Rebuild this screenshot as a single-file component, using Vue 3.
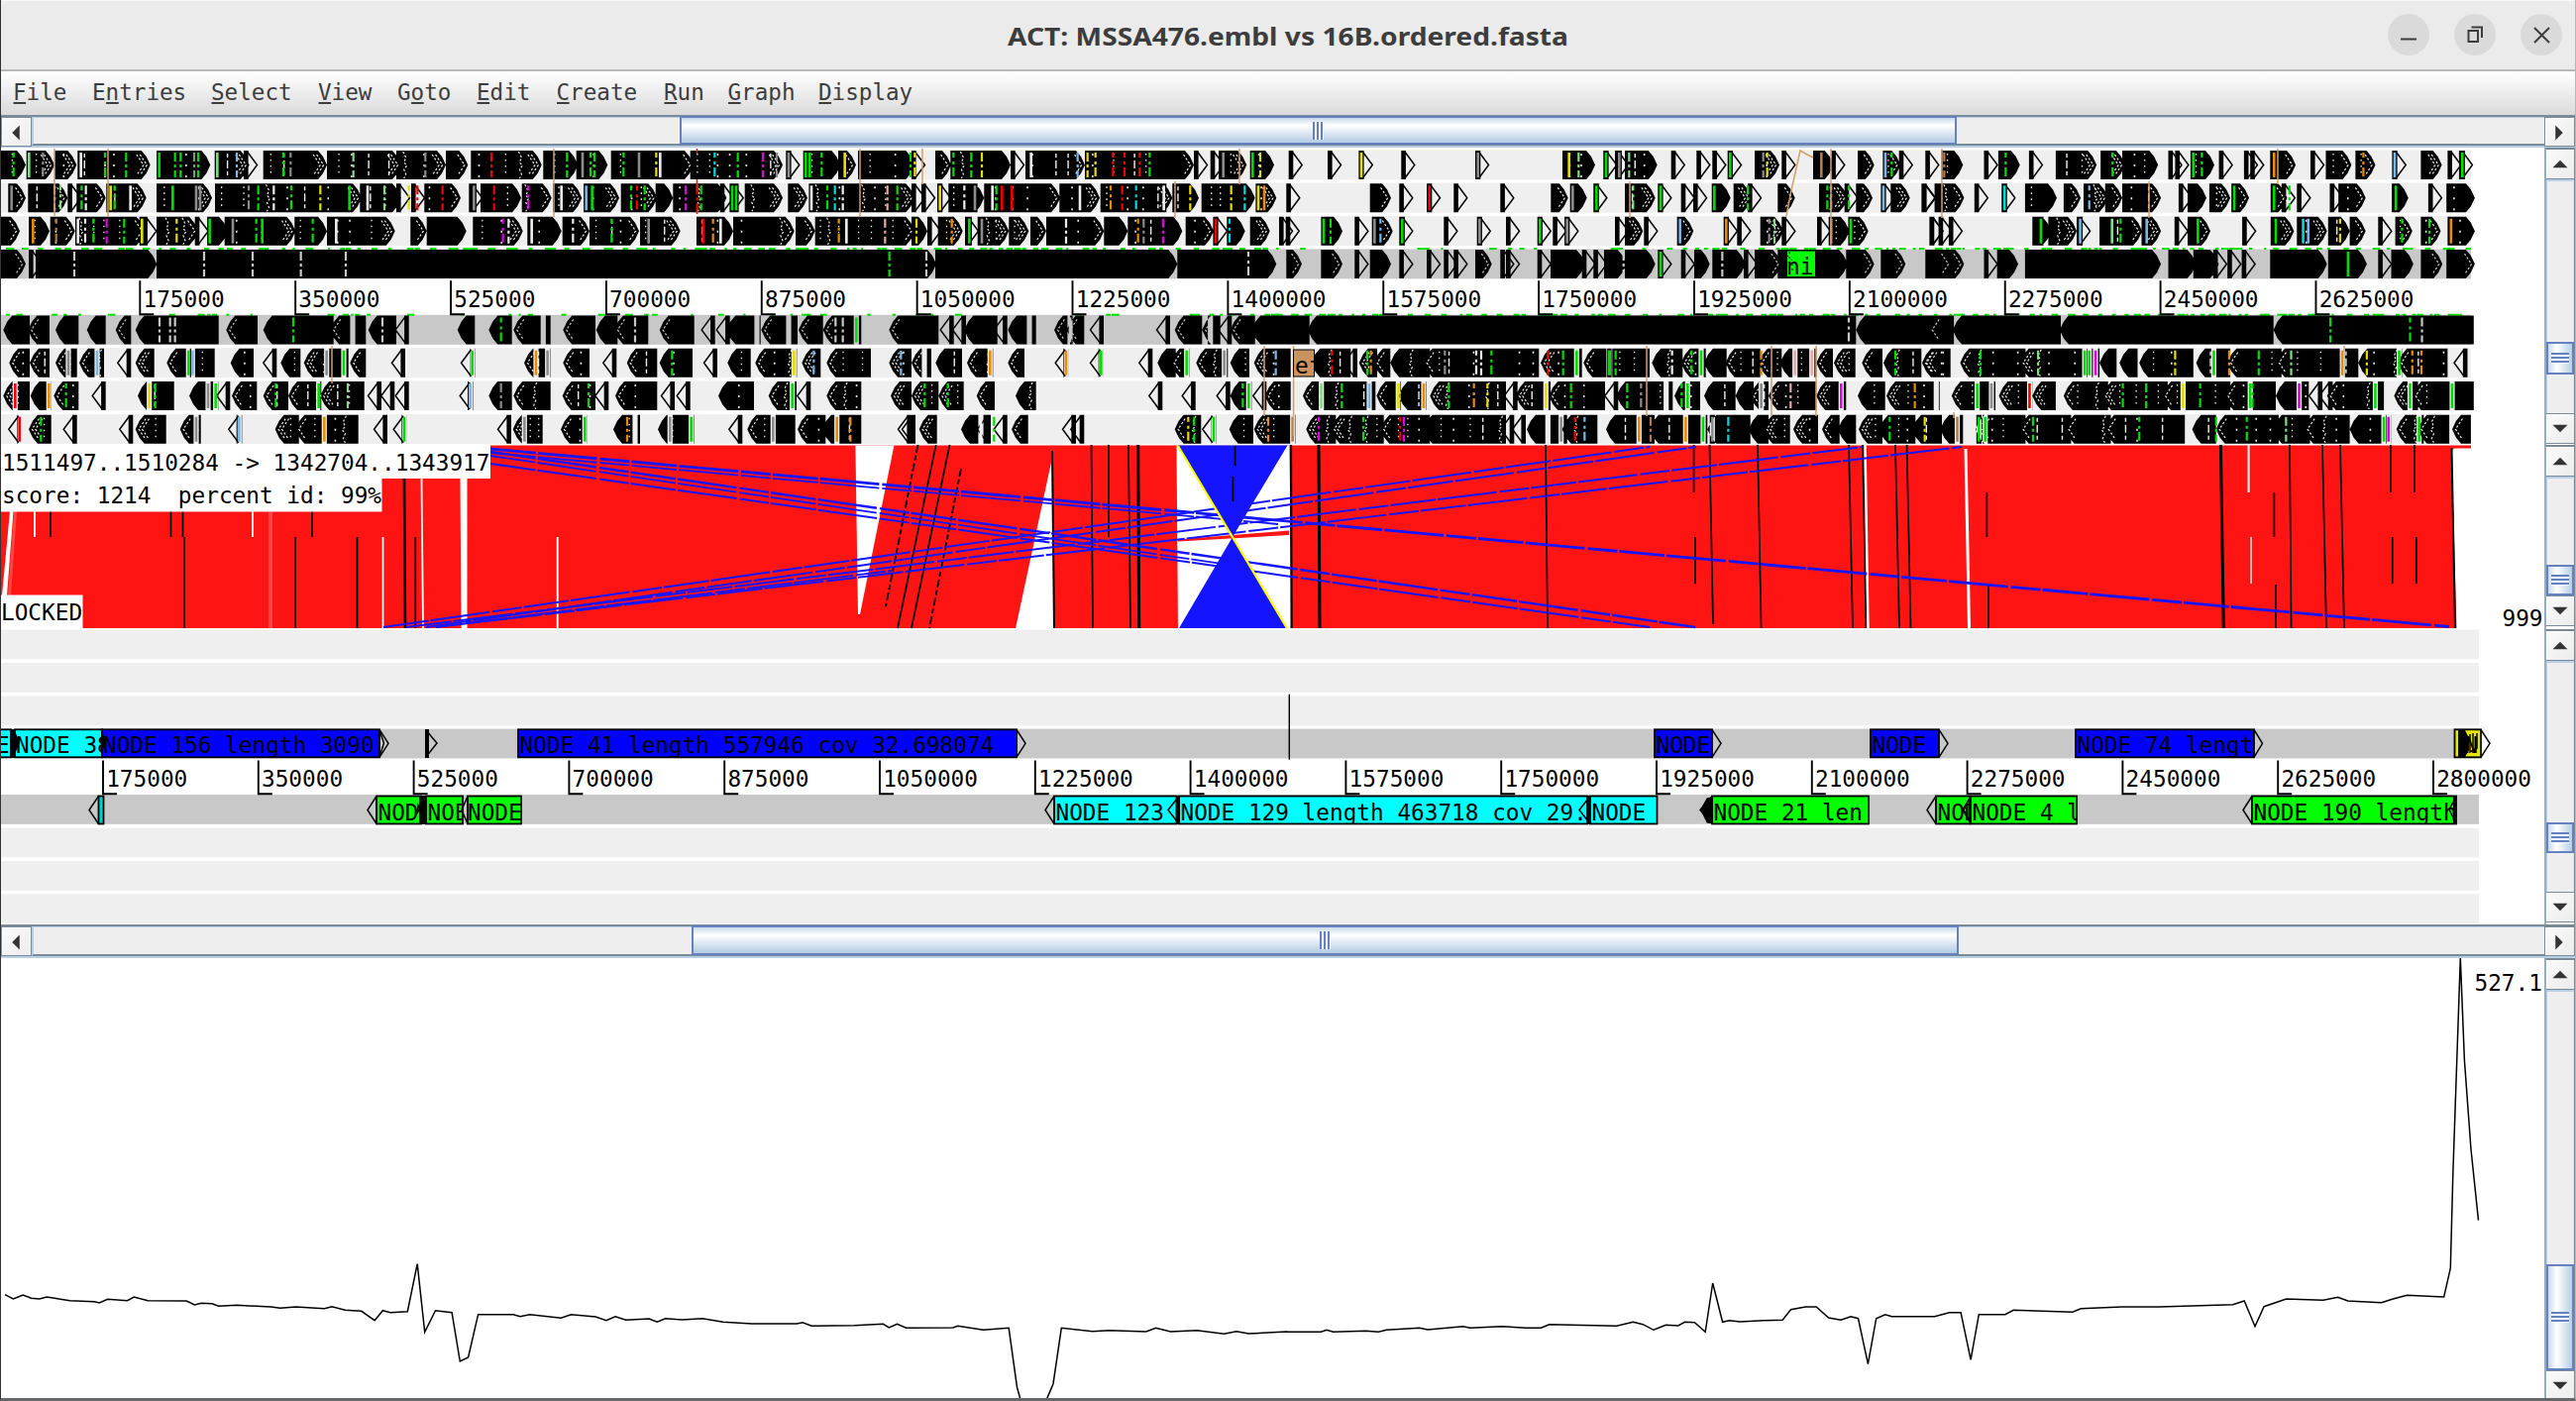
<script setup>
const menus = [
  ['', 'F', 'ile', 13], ['E', 'n', 'tries', 93], ['', 'S', 'elect', 213], ['', 'V', 'iew', 321],
  ['G', 'o', 'to', 401], ['', 'E', 'dit', 481], ['', 'C', 'reate', 561.5], ['', 'R', 'un', 670],
  ['', 'G', 'raph', 734.5], ['', 'D', 'isplay', 826],
]

const palette = {
  g: '#00dc00', G: '#84dc84', r: '#f00000', y: '#e6de00', o: '#e88c00', b: '#78b8e8', m: '#e000e0',
  c: '#00d8d8', s: '#8c8c8c', n: '#b07c50', p: '#e8a8a8', w: null,
}

// Each strand row: [top, direction, background, texture?, chunks of [origin, units per px, features]]
// "a-b" is a merged run of features, "a" a lone one, "g12" a coloured stripe, "g12!" an unbroken stripe.
const strandRows = [
  [152, 1, '#efefef', true, [
    [0, 3, '0-78 82-165 165-232 235-455 475-637 652-755 738-778 797-990 990-1215 g41 G88! s130 g318 g382 w245! g482! g530 g547 s588 g600 G658! b717 g858 s880 G1070'],
    [400, 3, '0-150 150-217 226-440 445-550 545-640 650-900 890-1170 1180-1222 1232-1345 1338-1392 1398-1570 s88 r288 g517 s564! g588 g600 g688 s735! y787 w799! c964 g1034 m1110 s1152 s1188! g1240! g1252! g1288 y1358! g1557'],
    [920, 3, '0-45 72-120 118-300 300-345 345-525 525-855 855-900 905-930 930-1015 1025-1098 1142 1260 1355 1483 g127 g181 y213 w362! b503 y533 y557 r610 r645 r691 g721 g1033! y1056 s944! y10 y1362!'],
    [1440, 3, '147 411-510 535-575 570-615 600-698 740 817 865 912 993-1068 1075 1170-1232 1225 1305-1355 1382-1435 1430 1510 s155! y431! G460 g543! s583! G613 g919! s1019 y1031 n1195! b1389! g1408'],
    [1700, 1.742, '452-490 527 552-590 606-632 653-725 732-775 770-833 851 863-888 890-932 940 984 995 1030-1075 1101 1128-1173 1180-1215 1245 1295-1332 1342 1362 n457 g565 g753 g895! g910 o1037! o1194 b1249! g1368!'],
  ]],
  [185.3, 1, '#efefef', true, [
    [0, 3, '25-78 85-205 205-245 232-320 322-443 474-642 651-1095 1090-1215 s35! n165 G183 g247 w260 y335! g347 w395! g523! s594! s606! s753 g782 w829 g882 y970 g1058! w1113! G1164'],
    [400, 3, '0-45 45-90 85-195 220-258 255-378 380-470 474-562 568-675 680-790 785-838 838-1000 980-1020 1010-1055 1055-1170 1186-1245 1250-1570 y38 r64 r140 s235! r296 m400 w500! b575! g593! g711 r729 g752 m876 r911 g923 g1017! g1029! w1257! g1305 c1328 w1352 p1487 g1517'],
    [920, 3, '0-40 30-70 78-117 112-220 220-450 448-570 572-790 790-870 878-1040 1043-1105 1135 1388-1452 1477 y86! w160 s192! w245! g257 r274! r304! w510! o603 r638 c680 w764! y844 y968 c1009 y1050! o1068!'],
    [1440, 3, '0 82 223 376-428 435-485 505 600-692 700 770-815 807 865-920 929-985 972 1063-1115 1188-1275 1265-1305 1300-1350 1377 1405-1463 1500 r8! s442! g514! G625 g708! g871! g972 g1213 n1225 g1278 b1383!'],
    [1700, 1.742, '417 440-492 510 558 599-655 667-697 702-745 740-770 770-838 869 885-918 923-960 962-993 1031-1060 1050-1075 1077-1103 1135 1150-1198 1244-1273 1308-1335 1340-1390 c563! b712 g967! g1037! g1064 g1251!'],
  ]],
  [218.7, 1, '#efefef', true, [
    [0, 3, '0-60 87-150 152-227 228-440 433-475 474-600 590-630 628-690 680-895 892-990 990-1196 o100! n170 w236! w258 g283 m323 g376 y430! y535 g635! s705! g776 g794! g947 w1018!'],
    [400, 3, '43-92 92-212 232-383 397-500 503-585 585-735 738-860 909-1020 1020-1205 1209-1268 1268-1570 m323 w340 w410! w535 g652 s764! r929! o959 w982! o1340 w1363! p1480'],
    [920, 3, '0-48 48 80-155 162-205 200-295 295-355 360-408 408-583 583-655 655-820 830-915 915-960 955-1010 1025-1085 1113 1133 1242-1305 1342 1395-1457 1477 y15 o122 g175! s213! w468 o686 s703 m762 r921! c963 g1248! g1269 s1402! b1420 g1486!'],
    [1440, 3, '52 152 240 335 382 418 570 600-655 658 758-808 900-945 940 1010-1080 1075 1182 1222-1280 1278-1337 1523 s160! g343! s425! b767! o907! s1037 G1053 n1225! g1284!'],
    [1700, 1.742, '431 447 465 612-645 640-690 690-715 730-760 745-805 804-838 862 885-925 981 1031-1072 1077-1130 1132-1170 1170-1198 1220 1250-1280 1295-1330 1342-1390 g627! b696! G752! g767 b813! g903! g1040! c1088! b1097! y1153 g1262 g1310 o1348!'],
  ]],
  [252, 1, '#c8c8c8', false, [
    [0, 3, '0-78 87-125 108-475 474-1230 w225 w765 w911 w1047 w618'],
    [400, 3, '0-1590 g1493'],
    [920, 3, '-10-75 72-805 805-1105 1135-1182 1240-1305 1342 1388-1452 1477-1523 w45 w1020'],
    [1440, 3, '0-45 52 82 147-197 223 240 335-375 375-480 470 505 537-605 600-692 700 770-815 810-857 865-965 960 993-1075 1063-1275 1270-1355 1375-1450 1510-1590 w596 g708! w895'],
    [1700, 1.742, '424-492 527 550-587 599-838 851-900 895-940 930 955 980 1030-1130 1132-1200 1220-1245 1243-1282 1295-1333 1340-1390 g1167!'],
  ]],
  [318.4, -1, '#c8c8c8', false, [
    [0, 3, '10-90 85-150 168-238 263-320 350-397 410-662 685-780 797-1010 1000-1108 1115-1200 w483 w515 w530 g888 w1068! w1158'],
    [400, 3, '38 185-238 280-350 355-467 505-603 605-670 660-763 797-902 928-965 965-1010 1000-1103 1105-1215 1218-1292 1292-1408 1492-1590 g317 w445! w1092! w723 g1393! w1188! w1330 w1352'],
    [920, 3, '-10-82 82-128 120-165 160-260 250-290 292-377 432-480 470-523 538-582 742-783 797-880 880-935 925-970 965-1040 1030-1205 1200-1590 w357! w480! w905!'],
    [1440, 3, '-30-1300 1300-1590 w1278'],
    [1700, 1.742, '430-474 472-662 660-1036 1036-1388 g1136 g1276 w1297'],
  ]],
  [351.7, -1, '#efefef', true, [
    [0, 3, '28-90 90-150 168-233 240-315 397 410-467 505-650 698-768 838 850-910 920-1055 1060-1108 s207! b294! g571! b583! s989! g1041!'],
    [400, 3, '27 237 387-467 505-585 667 698-790 797-897 972 1003-1073 1087-1213 1228-1285 1303-1437 1492-1560 g230! o423! s458! g835 y1204! b1264 b1528'],
    [920, 3, '0-60 73-153 168-247 292-342 476 582 730 745-800 785-840 862-958 965-1023 1037-1148 1210-1330 1350 1355-1410 1400-1450 1450-1570 w39! o238! o468! g574! g833! b1103 r1273 s947! g1380 o1391'],
    [1440, 3, '-10-340 345-470 475-675 682-775 770-845 840-908 905-1010 1005-1075 1070-1180 1180-1230 1233-1298 1318-1380 1383-1498 1500-1580 s55 w150 w165 g196 r367 g413 g454! g552! g554! g572 g802 g831! o1013 p1115! p1166! g1419 w743'],
    [1700, 1.742, '420-468 485-600 590-730 730-760 765-797 800-895 900-960 955-1050 1040-1185 1185-1262 1255-1342 1377 g521 G622 g704! g712! m723! y863 g931! o958 g1010 G1067 o1157! y1200 g1257! o1280 o1296'],
  ]],
  [385, -1, '#efefef', true, [
    [0, 3, '10-90 92-155 163-238 275-320 417-527 573-660 697 702-778 797-873 873-970 970-1103 1155 1195 r46! o148! g200 y452! g470 g653! g835 g965! G1053 s630!'],
    [400, 3, '38 233 280-350 355-467 503-603 643 663-790 843 890 975-1083 1127-1212 1210-1255 1303-1408 1497-1560 b224! g582 g1199! s317'],
    [920, 3, '0-82 82-158 197-252 315-377 760 860 920-965 965-1030 1030-1075 1070-1148 1185-1405 1408-1480 1475-1560 g40 g110 g1003 g1021! G1241! g1303 b1386! y1474! o1551!'],
    [1440, 3, '10-240 275 270-375 370-540 580 575-745 750-828 840-935 935-990 980-1035 1035-1180 1180-1270 1305-1388 1392-1553 g67 o143 y184 y361! g437 g607 w725! g772 g790! p1102 m1255! o1478 w1543! s649 s1013!'],
    [1700, 1.742, '470-547 553-612 612-653 667-745 735-850 840-960 950-1040 1040-1098 1122 1125-1140 1130-1230 1248-1290 1280-1388 g515! s540! r607! g771 g812 y877! g907 g995! g999 m1081! g1215! g1276! g1350!'],
  ]],
  [418.7, -1, '#efefef', true, [
    [0, 3, '67 87-155 233 403 410-503 545-608 733 833-905 895-1085 1173 r59! g124 b724! o982! s594!'],
    [400, 3, '32 348 353-443 498-578 657-738 792-902 1048 1063-1208 1215-1300 1290-1408 1517-1560 g24! s388! g571! o699 g893! s829! s1141! o1334! o1375 w723!'],
    [920, 3, '0-12 23-77 150-230 240 250-290 303-353 498 523 797-877 882-922 962-1035 1037-1163 1195-1285 1270-1430 1420-1570 g250 w210! y838 g856 g915! o1080 n1154! m1233 g1368 r1480 m1491'],
    [1440, 3, '-10-240 265 300 303-425 410-517 543-690 675-850 850-980 975-1035 1020-1100 1110-1185 1197-1250 1245-1300 1308-1380 1370-1480 1470-1560 w367! s407! r449 b478 o643! n678 o784! g837! c913 g1402 y1508 s865!'],
    [1700, 1.742, '450-490 512-600 590-680 670-750 740-880 893-935 935-1045 1035-1100 1090-1170 1170-1243 1252-1300 1290-1345 1350-1383 n480! g518! g529! g613 g800 g935 g989 G1058 g1230! m1238! g1292!'],
  ]],
]

let seed = 7
const rnd = () => {
  seed = (seed * 16807) % 2147483647
  return seed / 2147483647
}
const H = 29
const f = (n) => n.toFixed(1)

const rows = strandRows.map(([y, dir, bg, textured, chunks]) => {
  let solid = ''
  let outline = ''
  let chevrons = ''
  const stripes = []
  const holes = []
  const m = y + H / 2
  const b = y + H
  const lone = (x) => {
    const t = x + dir * 13.5
    const k = x + dir * 3.5
    const e = x + dir * 4.6
    solid += `M${f(x)} ${y}H${f(e)}V${b}H${f(x)}Z`
    outline += `M${f(k)} ${y + 1}L${f(t)} ${m}L${f(k)} ${b - 1}`
  }
  for (const [origin, unit, text] of chunks) {
    for (const tok of text.split(' ')) {
      if (/^[a-zA-Z]/.test(tok)) {
        const full = tok.endsWith('!')
        const x = origin + parseFloat(tok.slice(1)) / unit
        if (full) solid += `M${f(x - 2.6)} ${y}h5.2v${H}h-5.2Z`
        stripes.push({ x, color: palette[tok[0]] || bg, dash: full ? 'none' : rnd() > 0.5 ? '5 4 3 3 9 3' : '9 3 3 3', w: full ? 2.6 : 2.2 })
        continue
      }
      const range = tok.match(/^(-?\d+)-(\d+)$/)
      if (!range) {
        lone(origin + parseFloat(tok) / unit)
        continue
      }
      const p = origin + range[1] / unit
      const q = origin + range[2] / unit
      const w = q - p
      if (w < 15.5) {
        lone(dir > 0 ? p : q)
        continue
      }
      const tail = dir > 0 ? p : q
      const tip = dir > 0 ? q : p
      const neck = tip - dir * 9
      solid += `M${f(tail)} ${y}H${f(neck)}L${f(tip - dir * 4)} ${y + 6}L${f(tip)} ${m}L${f(tip - dir * 4)} ${b - 6}L${f(neck)} ${b}H${f(tail)}Z`
      const dice = rnd()
      const layers = textured ? (dice > 0.65 ? 2 : dice > 0.3 ? 1 : 0) : w < 45 && dice > 0.5 ? 1 : 0
      for (let i = 1; i <= layers; i++) {
        const c = tip - dir * i * 3.4
        if (Math.abs(c - tail) > 11) chevrons += `M${f(c - dir * 7)} ${y + 4}L${f(c)} ${m}L${f(c - dir * 7)} ${b - 4}`
      }
      if (textured) {
        let x = Math.min(tail, neck) + 5 + rnd() * 8
        const end = Math.max(tail, neck) - 3
        while (x < end) {
          const kind = rnd()
          if (kind < 0.34) holes.push({ x, dash: '1.6 4.4', w: 1.3 })
          else if (kind < 0.5) holes.push({ x, dash: '4 3 8 3', w: 1.4 })
          else if (kind < 0.78) holes.push({ x, dash: '2 9', w: 1.6 })
          else if (kind < 0.88) chevrons += `M${f(x - dir * 2)} ${y + 1}l${dir * 3} 6l${-dir * 2} 5l${dir * 3} 3l${-dir * 3} 4l${dir * 2} 5l${-dir * 2} 4`
          x += 8 + rnd() * 18
        }
      }
    }
  }
  return { y, bg, solid, outline, chevrons, stripes, holes }
})

const ticks = [250, 316.7].flatMap((y) => {
  const out = []
  for (let x = 6; x < 2490; x += 4 + rnd() * 15) {
    if (y < 300 && x > 1290 && x < 1680 && rnd() > 0.25) continue
    if (y > 300 && x < 1200 && rnd() > 0.45) continue
    out.push({ x, y, w: 2 + rnd() * 6 })
  }
  return out
})

const bridges = [
  [55, 150, 219], [109, 150, 219], [559, 150, 219], [868, 150, 219], [931, 150, 186], [1251, 150, 186],
  [1186, 183, 220], [1645, 183, 220], [1848, 150, 248], [1960, 150, 220], [2299, 150, 186], [2169, 183, 220],
  [335, 349, 387], [1276, 349, 420], [1305.6, 349, 440], [1662, 349, 420], [1788, 349, 420], [1833, 349, 420],
  [1972, 416, 422], [2366, 349, 354],
]

const ruler1 = Array.from({ length: 15 }, (_, i) => ({ x: 141.3 + i * 156.87, label: String((i + 1) * 175000) }))
const ruler2 = Array.from({ length: 16 }, (_, i) => ({ x: 104 + i * 156.8, label: String((i + 1) * 175000) }))
const CH = 13.68
const scoreLine = 'score: 1214\u00a0\u00a0percent id: 99%'

// Seams between matches: [x top, y top, x bottom, y bottom, width]
const seamsBlack = [
  [51, 516, 51, 542], [172.5, 516, 172.5, 542], [184.5, 516, 184.5, 542], [315, 516, 315, 542], [186, 542, 186, 634],
  [298, 542, 298, 634], [360.5, 542, 360.5, 634], [408, 483, 409, 634, 2.6], [419.3, 542, 419.3, 634],
  [944.7, 449, 906, 634], [958.5, 449, 920, 634],
  [1062, 455, 1064, 634, 2], [1101.5, 449, 1103, 634], [1119, 449, 1119, 542], [1139, 449, 1141, 634],
  [1148.7, 449, 1149.7, 634, 3], [1303, 449, 1303.6, 634, 2.2], [1331, 449, 1332, 634, 3], [1560, 449, 1562, 634],
  [1709.6, 449, 1709.6, 497], [1711, 542, 1711, 589], [1725.5, 449, 1729, 630], [1774, 449, 1777.6, 634],
  [1866, 449, 1870, 634], [1880, 449, 1883.5, 634], [1913, 449, 1917, 634], [1924.6, 449, 1928.5, 634],
  [2005.4, 497, 2005.4, 542], [2007, 589, 2007, 634], [2241.4, 449, 2244.3, 634, 3], [2295.4, 497, 2295.4, 542],
  [2297, 590, 2297, 634], [2311, 449, 2312.6, 634], [2344, 449, 2348, 634], [2362, 449, 2366, 634],
  [2413, 449, 2413, 497], [2414.7, 542, 2414.7, 589], [2437, 449, 2437, 497], [2438.8, 542, 2438.8, 589],
  [2474.5, 452, 2478, 634, 2],
]
const seamsWhite = [
  [35, 516, 35, 542], [255, 516, 255, 542], [386.5, 542, 386.5, 634], [425.5, 483, 427, 634],
  [562.7, 542, 562.7, 634], [1882.5, 449, 1885.5, 634, 2.4], [1984, 453, 1987.5, 634, 3],
  [2269.6, 449, 2269.6, 497, 2], [2272, 542, 2272, 589, 1.4],
]
const hits = [
  [495, 453, 2472, 632.5, 2.8], [495, 457, 1290, 529, 1.8], [495, 456, 1711, 633, 2.4], [495, 460, 1260, 573, 1.8],
  [495, 468, 1665, 633, 2], [387, 633, 1665, 451, 2], [430, 633, 1712, 451, 2],
  [410, 633, 1880, 451, 2], [440, 633, 1980, 451, 2], [470, 629, 900, 576, 1.8],
]

const contigsTop = [
  [0, 11, '#00ffff', 'E', null, -4], [15, 88, '#00ffff', 'NODE 38', null, 1], [103, 280, '#0000ff', 'NODE 156 length 3090', 392, 1],
  [523, 503, '#0000ff', 'NODE 41 length 557946 cov 32.698074', 1035], [1670, 58, '#0000ff', 'NODE', 1737],
  [1888, 69, '#0000ff', 'NODE', 1966], [2095, 180, '#0000ff', 'NODE 74 lengt', 2283.5], [2477.5, 26.5, '#e6e600', 'N', 2513, 10],
]
const contigsBottom = [
  [99.5, 5, '#00d0d0', '', 90], [380, 45, '#00ff00', 'NOD', 371], [430, 37, '#00ff00', 'NOE', null],
  [472, 54, '#00ff00', 'NODE', 466, 0], [1064, 123.5, '#00ffff', 'NODE 123', 1055],
  [1190, 412, '#00ffff', 'NODE 129 length 463718 cov 29.', 1179], [1605, 67.5, '#00ffff', 'NODE', 1594],
  [1728, 158, '#00ff00', 'NODE 21 len', 1716], [1954, 34, '#00ff00', 'NOD', 1945], [1989, 107, '#00ff00', 'NODE 4 l', 1982],
  [2273, 206, '#00ff00', 'NODE 190 length', 2264],
]
const contigs = [
  ...contigsTop.map((c) => ({ c, y: 736.3, dir: 1 })),
  ...contigsBottom.map((c) => ({ c, y: 803.5, dir: -1 })),
].map(({ c: [x, w, color, label, tip, pad = 1.5], y, dir }) => ({
  x, w, color, label, y, pad,
  head: tip === null ? '' : `M${dir > 0 ? x + w : x} ${y}L${tip} ${y + 14}L${dir > 0 ? x + w : x} ${y + 28}`,
}))

const trace = (ox, sx, oy, s) => s.split(' ').map((p) => {
  const [a, b] = p.split(',')
  return `${f(ox + a / sx)},${f(oy + b / 3)}`
}).join(' ')
const coverage = [
  trace(0, 1.206, 1200, '6,320 16,333 28,321 38,331 48,333 57,327 85,338 115,341 121,345 131,334 155,338 163,327 180,338 227,339 237,351 245,346 258,347 266,355 288,352 330,357 341,361 360,357 395,362 404,356 420,367 440,370 456,398 466,368 475,374 496,371 508,227 517,433 530,368 550,374 560,522 570,510 582,380 625,380 633,386 645,380 683,391 695,380 725,387 738,398 749,386 762,397 790,393 800,403 810,392 830,396 855,392 880,403 915,408 970,408 977,404 988,415 1040,413 1075,409 1082,420 1092,409 1103,421 1160,420 1166,415 1197,427 1228,421 1238,600 1242,637 1274,637 1282,590 1292,421 1330,431 1350,428 1395,432 1407,421 1425,432 1457,428 1490,439 1505,431 1520,438 1566,432'),
  trace(1300, 1.206, 960, '0,1153 40,1153 47,1147 55,1153 95,1150 110,1153 120,1147 160,1141 170,1146 213,1136 222,1141 260,1136 290,1141 308,1141 318,1130 400,1135 420,1123 432,1130 445,1147 460,1132 475,1134 483,1123 495,1124 508,1153 517,1005 529,1123 537,1118 550,1122 580,1118 602,1117 612,1085 630,1077 643,1077 658,1110 673,1117 685,1106 694,1112 706,1250 716,1112 727,1100 735,1106 787,1106 805,1094 819,1094 831,1237 841,1100 873,1100 883,1087 955,1093 965,1082 1015,1077 1060,1077 1150,1070 1164,1059 1177,1136 1188,1076 1215,1053 1260,1057 1278,1048 1290,1059 1331,1064 1345,1053 1362,1042 1407,1047 1415,960 1418,675 1427,20 1432,330 1440,600 1449,815'),
].join(' ')

const stripesBelow = [635.6, 669, 702.5, 735.6, 802, 835.7, 869, 902.4]
// Vertical scrollbars: space above the thumb, thumb height, slack under the lower button
const vbars = { top: [162, 33, 1], match: [87, 31, 3], below: [161, 31, 2], graph: [275, 107, 3] }
</script>

<template>
  <div class="window">
    <header class="titlebar">
      <svg class="title" width="568" height="40" viewBox="0 0 568 40">
        <text x="1" y="30.5" textLength="566" lengthAdjust="spacingAndGlyphs">ACT: MSSA476.embl vs 16B.ordered.fasta</text>
      </svg>
      <div class="controls">
        <span class="ctl"><svg viewBox="0 0 42 42"><path d="M13 25.5H29" /></svg></span>
        <span class="ctl"><svg viewBox="0 0 42 42"><path d="M14.5 17H24V28H14.5ZM17.5 13.5H28V24" /></svg></span>
        <span class="ctl"><svg viewBox="0 0 42 42"><path d="M14 14L29 29M29 14L14 29" /></svg></span>
      </div>
    </header>

    <nav class="menubar">
      <svg width="2598" height="44" viewBox="1 72 2598 44">
        <text v-for="(m, i) in menus" :key="i" :x="m[3]" y="100.5" :textLength="(m[0] + m[1] + m[2]).length * 13.6" lengthAdjust="spacingAndGlyphs">{{ m[0] }}<tspan>{{ m[1] }}</tspan>{{ m[2] }}</text>
        <rect v-for="(m, i) in menus" :key="'u' + i" :x="m[3] + m[0].length * 13.6 + 0.5" y="103" width="12.6" height="2" />
      </svg>
    </nav>

    <div class="hbar">
      <span class="btn"><svg viewBox="0 0 30 30"><path d="M11 15L19 7V23Z" /></svg></span>
      <span class="rail rail-a"><span class="thumb thumb-a"><i class="grip" /></span></span>
      <span class="btn end"><svg viewBox="0 0 30 30"><path d="M19 15L11 7V23Z" /></svg></span>
    </div>

    <section class="pane genome">
      <svg class="canvas" viewBox="1 149 2567 300">
        <rect v-for="r in rows" :key="r.y" x="0" :y="r.y - 0.6" width="2494" height="30" :fill="r.bg" />
        <rect v-for="(t, i) in ticks" :key="i" :x="t.x" :y="t.y" :width="t.w" height="2" fill="#00e000" />
        <g v-for="r in rows" :key="'g' + r.y">
          <path :d="r.outline" class="outline" />
          <path :d="r.solid" />
          <path :d="r.chevrons" fill="none" :stroke="r.bg" stroke-width="1.2" stroke-dasharray="2.2 2" />
          <line v-for="(h, i) in r.holes" :key="i" :x1="h.x" :x2="h.x" :y1="r.y + 3" :y2="r.y + 27" :stroke="r.bg" :stroke-width="h.w" :stroke-dasharray="h.dash" />
          <line v-for="(s, i) in r.stripes" :key="'s' + i" :x1="s.x" :x2="s.x" :y1="r.y + 2" :y2="r.y + 27" :stroke="s.color" :stroke-width="s.w" :stroke-dasharray="s.dash" />
        </g>
        <line v-for="(b, i) in bridges" :key="'l' + i" :x1="b[0]" :x2="b[0]" :y1="b[1]" :y2="b[2]" class="bridge" />
        <path d="M1803 218L1808 192L1817 152L1824 156L1830 159" class="bridge" />
        <line x1="703.5" x2="703.5" y1="150" y2="218" stroke="#e02020" stroke-width="1.6" stroke-dasharray="5 26 12 18" />
        <rect x="1804" y="253.5" width="28" height="25.5" fill="#00ff00" />
        <svg x="1804" y="253" width="28" height="27"><text x="-1" y="24" class="mono">ni</text></svg>
        <path d="M1804 258l5 5v12M1806 254v24" stroke="#000" stroke-dasharray="2 3" fill="none" />
        <rect x="1305.5" y="353" width="21" height="27" fill="#c8935f" stroke="#000" />
        <svg x="1306" y="353" width="20" height="27"><text x="1" y="24" class="mono">ef</text></svg>
        <g v-for="t in ruler1" :key="t.label">
          <path :d="`M${t.x} 283.3V317.3h14`" class="tick" />
          <text :x="t.x + 3.2" y="310" class="mono" :textLength="t.label.length * CH" lengthAdjust="spacingAndGlyphs">{{ t.label }}</text>
        </g>
      </svg>
      <div class="vbar" :style="{ paddingBottom: vbars.top[2] + 'px' }">
        <span class="btn"><svg viewBox="0 0 30 30"><path d="M15 11L23 19H7Z" /></svg></span>
        <span class="rail" :style="{ paddingTop: vbars.top[0] + 'px' }"><span class="thumb" :style="{ height: vbars.top[1] + 'px' }"><i class="grip" /></span></span>
        <span class="btn"><svg viewBox="0 0 30 30"><path d="M15 19L23 11H7Z" /></svg></span>
      </div>
    </section>

    <section class="pane match">
      <svg class="canvas" viewBox="1 449 2567 186">
        <path d="M0 449.5H2494V452.5H2477L2474.5 455L2479.5 634H0Z" fill="#ff1414" />
        <path d="M863.4 449.5H902.4L868 620H866ZM1062 462L1025 634.5H1064ZM1187.5 449.5H1301.5L1303.5 634.5H1189ZM10 516H13.5L7 601H2ZM464.5 483H471.5V634.5H465.5Z" fill="#fff" />
        <path d="M14 516h3L11 601h-3ZM271 516h4V634h-4Z" fill="#ff4444" />
        <path d="M1189 544.5L1301 535.5V540L1189 546.5Z" fill="#ff1414" />
        <path d="M1189 449.5H1299.5L1244 542L1298 634H1190L1244 542Z" fill="#1414ff" />
        <path d="M926.5 449L894 612M970 473L938 634" stroke="#000" stroke-width="1.8" stroke-dasharray="8 3 5 3" />
        <path d="M1246.6 450V470M1244.5 481V506" stroke="#000" stroke-width="1.6" />
        <line v-for="(s, i) in seamsBlack" :key="i" :x1="s[0]" :y1="s[1]" :x2="s[2]" :y2="s[3]" stroke="#000" :stroke-width="s[4] || 1.7" />
        <line v-for="(s, i) in seamsWhite" :key="'w' + i" :x1="s[0]" :y1="s[1]" :x2="s[2]" :y2="s[3]" stroke="#fff" :stroke-width="s[4] || 1.8" />
        <line v-for="(s, i) in hits" :key="'h' + i" :x1="s[0]" :y1="s[1]" :x2="s[2]" :y2="s[3]" stroke="#1414ff" :stroke-width="s[4]" stroke-dasharray="46 2 60 3 30 2" />
        <path d="M1189 450L1299 634" stroke="#ffff00" stroke-width="2.2" />
        <path d="M0 449H495V483H385.5V516.4H0ZM0 600.5H83.5V635H0Z" fill="#fff" />
        <text x="2" y="474.8" class="mono" :textLength="36 * CH" lengthAdjust="spacingAndGlyphs">1511497..1510284 -&gt; 1342704..1343917</text>
        <text x="2" y="508" class="mono" :textLength="28 * CH" lengthAdjust="spacingAndGlyphs">{{ scoreLine }}</text>
        <text x="1" y="626" class="mono" :textLength="6 * CH" lengthAdjust="spacingAndGlyphs">LOCKED</text>
        <text x="2525.5" y="632" class="mono" :textLength="3 * CH" lengthAdjust="spacingAndGlyphs">999</text>
      </svg>
      <div class="vbar" :style="{ paddingBottom: vbars.match[2] + 'px' }">
        <span class="btn"><svg viewBox="0 0 30 30"><path d="M15 11L23 19H7Z" /></svg></span>
        <span class="rail" :style="{ paddingTop: vbars.match[0] + 'px' }"><span class="thumb" :style="{ height: vbars.match[1] + 'px' }"><i class="grip" /></span></span>
        <span class="btn"><svg viewBox="0 0 30 30"><path d="M15 19L23 11H7Z" /></svg></span>
      </div>
    </section>

    <section class="pane contigs">
      <svg class="canvas" viewBox="1 635 2567 298">
        <rect v-for="(y, i) in stripesBelow" :key="y" x="0" :y="y" width="2502" height="29.8" :fill="i === 3 || i === 4 ? '#c8c8c8' : '#efefef'" />
        <path d="M1301.3 700.7V766.8" stroke="#000" stroke-width="1.4" />
        <g v-for="t in ruler2" :key="t.label">
          <path :d="`M${t.x} 767.5V801.3h14`" class="tick" />
          <text :x="t.x + 3.2" y="794" class="mono" :textLength="t.label.length * CH" lengthAdjust="spacingAndGlyphs">{{ t.label }}</text>
        </g>
        <g v-for="(c, i) in contigs" :key="i">
          <rect :x="c.x" :y="c.y" :width="c.w" height="28" :fill="c.color" stroke="#000" stroke-width="1.8" />
          <svg :x="c.x" :y="c.y" :width="c.w" height="28">
            <text v-if="c.label" :x="c.pad" y="24.2" class="mono" :textLength="c.label.length * CH" lengthAdjust="spacingAndGlyphs">{{ c.label }}</text>
          </svg>
        </g>
        <path v-for="(c, i) in contigs" :key="'c' + i" :d="c.head" class="outline" />
        <path d="M11 736h4v29h-4zM15 738l5 11-5 12M103 738l4 10-4 12" />
        <path d="M383 737l4.5 13-4.5 14M430 737l11 13-11 14" class="outline" />
        <path d="M429 736h4v29h-4zM423 803h7v29h-7zM421 810l4 6-4 6M1187 803h4v29h-4zM1601 803h4v29h-4zM1718 817l6-12h5v26h-5zM1716 817l7-12 3 1-6 11 6 12-3 2zM2476 803h4v28h-4zM2481 737h7l4 8v12l-4 7h-7z" />
        <path d="M2493 741v18l7-4v-15M2496 740v20" class="outline" />
        <path d="M2478 806l-6 11 6 12M1988 806l-7 11 7 12" class="outline" />
      </svg>
      <div class="vbar" :style="{ paddingBottom: vbars.below[2] + 'px' }">
        <span class="btn"><svg viewBox="0 0 30 30"><path d="M15 11L23 19H7Z" /></svg></span>
        <span class="rail" :style="{ paddingTop: vbars.below[0] + 'px' }"><span class="thumb" :style="{ height: vbars.below[1] + 'px' }"><i class="grip" /></span></span>
        <span class="btn"><svg viewBox="0 0 30 30"><path d="M15 19L23 11H7Z" /></svg></span>
      </div>
    </section>

    <div class="hbar second">
      <span class="btn"><svg viewBox="0 0 30 30"><path d="M11 15L19 7V23Z" /></svg></span>
      <span class="rail rail-b"><span class="thumb thumb-b"><i class="grip" /></span></span>
      <span class="btn end"><svg viewBox="0 0 30 30"><path d="M19 15L11 7V23Z" /></svg></span>
    </div>

    <section class="pane graph">
      <svg class="canvas" viewBox="1 967 2567 444">
        <polyline :points="coverage" fill="none" stroke="#000" stroke-width="1.5" />
        <text x="2497.5" y="1000" class="mono" :textLength="5 * CH" lengthAdjust="spacingAndGlyphs">527.1</text>
      </svg>
      <div class="vbar" :style="{ paddingBottom: vbars.graph[2] + 'px' }">
        <span class="btn"><svg viewBox="0 0 30 30"><path d="M15 11L23 19H7Z" /></svg></span>
        <span class="rail" :style="{ paddingTop: vbars.graph[0] + 'px' }"><span class="thumb" :style="{ height: vbars.graph[1] + 'px' }"><i class="grip" /></span></span>
        <span class="btn"><svg viewBox="0 0 30 30"><path d="M15 19L23 11H7Z" /></svg></span>
      </div>
    </section>
  </div>
</template>

<style>
body { margin: 0; background: #fff; }
</style>

<style scoped>
.window {
  box-sizing: border-box;
  width: 2600px;
  height: 1414px;
  display: flex;
  flex-direction: column;
  overflow: hidden;
  background: #fff;
  border-left: 1px solid #333;
  border-right: 1px solid #b8b8b8;
  border-bottom: 3px solid #66686a;
}
.titlebar {
  box-sizing: border-box;
  height: 72px;
  flex: none;
  display: flex;
  align-items: center;
  padding: 0 13px 2px 1015px;
  background: #ebebeb;
  border-top: 1px solid #f8f8f8;
  border-bottom: 2px solid #b9b9b9;
}
.title text {
  font: bold 24.5px "Noto Sans", "Open Sans", sans-serif;
  fill: #3d3d3d;
}
.controls { display: flex; gap: 25px; margin-left: auto; }
.ctl { width: 42px; height: 42px; border-radius: 50%; background: #dadada; }
.ctl svg { display: block; width: 42px; height: 42px; }
.ctl path { fill: none; stroke: #3d3d3d; stroke-width: 2; }
.menubar {
  height: 44px;
  flex: none;
  background: linear-gradient(#fff, #dadada);
}
.menubar svg { display: block; }
.menubar text {
  font: 22.6px "DejaVu Sans Mono", monospace;
  fill: #3d3d3d;
}
.menubar rect { fill: #3d3d3d; }
.hbar {
  box-sizing: border-box;
  height: 33px;
  flex: none;
  display: flex;
  background: #eee;
  border-top: 2px solid #7a8a99;
  border-bottom: 2px solid #b8cfe5;
}
.hbar.second { height: 34px; }
.btn {
  box-sizing: border-box;
  width: 31px;
  height: 30px;
  flex: none;
  background: linear-gradient(135deg, #fafafa, #ececec);
  border: 1px solid #7a8a99;
  box-shadow: inset 1px 1px 0 #fff;
}
.btn svg { display: block; width: 28px; height: 28px; }
.hbar .btn svg { margin-top: 1px; }
.btn path { fill: #333; }
.rail { box-sizing: border-box; flex: 1; display: flex; background: #eee; }
.hbar .rail {
  border-left: 2px solid #b8cfe5;
  border-top: 1px solid #b8cfe5;
  border-bottom: 2px solid #7a8a99;
}
.rail-a { padding-left: 652px; }
.rail-b { padding-left: 664px; }
.thumb {
  box-sizing: border-box;
  display: flex;
  align-items: center;
  justify-content: center;
  border: 2px solid #6382bf;
}
.hbar .thumb { background: linear-gradient(#c8d9ea, #fff 30%, #b8cfe5 95%); margin: -2px 0 -1px; }
.thumb-a { width: 1289px; }
.thumb-b { width: 1279px; }
.grip { display: block; }
.hbar .grip {
  width: 11px;
  height: 18px;
  background: repeating-linear-gradient(90deg, #6382bf 0 2px, #f4f8fc 2px 4px);
}
.pane { display: flex; flex: none; }
.genome { height: 300px; }
.match { height: 186px; }
.contigs { height: 298px; }
.graph { height: 444px; }
.canvas { display: block; width: 2567px; height: 100%; flex: none; }
.vbar {
  box-sizing: border-box;
  width: 31px;
  height: 100%;
  display: flex;
  flex-direction: column;
  border-left: 2px solid #9aabbc;
  border-right: 1px solid #7a8a99;
  border-top: 1px solid #7a8a99;
}
.vbar .btn { width: 28px; height: 31px; border-left: 0; border-right: 0; }
.vbar .btn svg { width: 28px; height: 29px; }
.vbar .rail {
  flex-direction: column;
  border-top: 2px solid #b8cfe5;
  border-left: 1px solid #b8cfe5;
  border-right: 1px solid #dfe6ee;
}
.vbar .thumb { background: linear-gradient(90deg, #c8d9ea, #fff 35%, #b8cfe5); margin: 0 -1px; flex: none; }
.vbar .grip {
  width: 18px;
  height: 11px;
  background: repeating-linear-gradient(#6382bf 0 2px, #f4f8fc 2px 4px);
}
.mono { font: 22.8px "DejaVu Sans Mono", "Liberation Mono", monospace; fill: #000; }
.outline { fill: none; stroke: #000; stroke-width: 1.5; }
.bridge { fill: none; stroke: #d2a06e; stroke-width: 1.5; }
.tick { fill: none; stroke: #000; stroke-width: 1.9; }
</style>
